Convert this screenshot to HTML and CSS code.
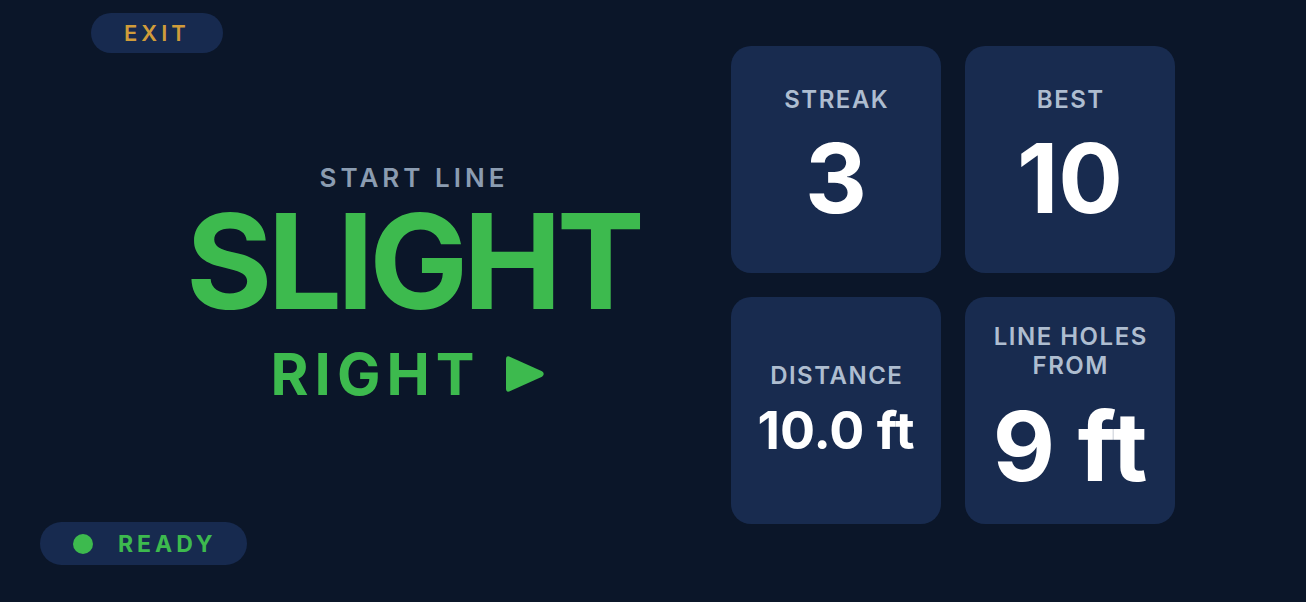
FILE: index.html
```html
<!DOCTYPE html>
<html>
<head>
<meta charset="utf-8">
<link rel="stylesheet" href="styles.css">
</head>
<body>
<div class="app">
  <section class="left">
    <div class="pill exit">EXIT</div>
    <div class="center">
      <div class="kicker">START LINE</div>
      <div class="headline">SLIGHT</div>
      <div class="direction">
        <span class="dir-text">RIGHT</span>
        <svg class="arrow" width="40" height="38" viewBox="0 0 40 38">
          <path d="M1 4.5 Q1 0 5.3 1.9 L37 16.3 Q40.5 19 37 21.7 L5.3 36.1 Q1 38 1 33.5 Z" fill="#3dba4e"/>
        </svg>
      </div>
    </div>
    <div class="pill ready"><span class="dot"></span><span>READY</span></div>
  </section>
  <section class="stats">
    <div class="card">
      <div class="label">STREAK</div>
      <div class="value big">3</div>
    </div>
    <div class="card">
      <div class="label">BEST</div>
      <div class="value big">10</div>
    </div>
    <div class="card card-low">
      <div class="label">DISTANCE</div>
      <div class="value mid">10.0 ft</div>
    </div>
    <div class="card">
      <div class="label two">LINE HOLES<br>FROM</div>
      <div class="value big">9 ft</div>
    </div>
  </section>
</div>
</body>
</html>
```
FILE: styles.css
```css
* { box-sizing: border-box; }
html, body { margin: 0; padding: 0; }
body {
  background: #0b1629;
  font-family: Inter, "Noto Sans", "Liberation Sans", sans-serif;
  width: 1306px;
  height: 602px;
  overflow: hidden;
}
.app {
  display: flex;
  height: 602px;
}
.left {
  width: 731px;
  display: flex;
  flex-direction: column;
  padding: 13px 0 37px 40px;
}
.pill {
  align-self: flex-start;
  background: #172a4f;
  border-radius: 999px;
  display: flex;
  align-items: center;
  font-weight: 600;
}
.exit {
  margin-left: 51px;
  height: 40px;
  padding: 0 33px 0 33px;
  color: #d09c3a;
  font-size: 22px;
  letter-spacing: 4px;
}
.ready {
  height: 43px;
  padding: 0 30px 0 33px;
  color: #3dba4e;
  font-size: 23px;
  letter-spacing: 4px;
  font-weight: 700;
}
.dot {
  width: 20px;
  height: 20px;
  border-radius: 50%;
  background: #3dba4e;
  margin-right: 25px;
}
.center {
  flex: 1;
  display: flex;
  flex-direction: column;
  align-items: center;
  justify-content: center;
  padding-left: 53px;
  padding-bottom: 8px;
}
.kicker {
  color: #8b9cb1;
  font-size: 26px;
  line-height: 26px;
  font-weight: 600;
  letter-spacing: 4px;
  margin-right: -4px;
}
.headline {
  color: #3dba4e;
  font-size: 132px;
  line-height: 132px;
  font-weight: 700;
  letter-spacing: -5px;
  margin-top: 4px;
  margin-left: 2px;
}
.direction {
  display: flex;
  align-items: center;
  margin-top: 18px;
  height: 58px;
  margin-left: -8px;
}
.dir-text {
  color: #3dba4e;
  font-size: 58px;
  line-height: 58px;
  font-weight: 700;
  letter-spacing: 6px;
}
.arrow {
  margin-left: 25px;
}
.stats {
  display: grid;
  grid-template-columns: 210px 210px;
  grid-template-rows: 227px 227px;
  gap: 24px;
  padding-top: 46px;
  align-content: start;
}
.card {
  background: #182b4f;
  border-radius: 20px;
  display: flex;
  flex-direction: column;
  align-items: center;
  justify-content: center;
  padding-bottom: 6px;
}
.card-low {
  padding-bottom: 0;
}
.label {
  color: #aebdd0;
  font-size: 24px;
  line-height: 24px;
  font-weight: 600;
  letter-spacing: 1.5px;
  text-align: center;
  margin-right: -1.5px;
}
.label.two {
  line-height: 29px;
}
.value {
  color: #ffffff;
  font-weight: 700;
  text-align: center;
}
.value.big {
  font-size: 96px;
  line-height: 96px;
  margin-top: 18px;
}
.value.mid {
  font-size: 52px;
  line-height: 52px;
  margin-top: 17px;
}
```
